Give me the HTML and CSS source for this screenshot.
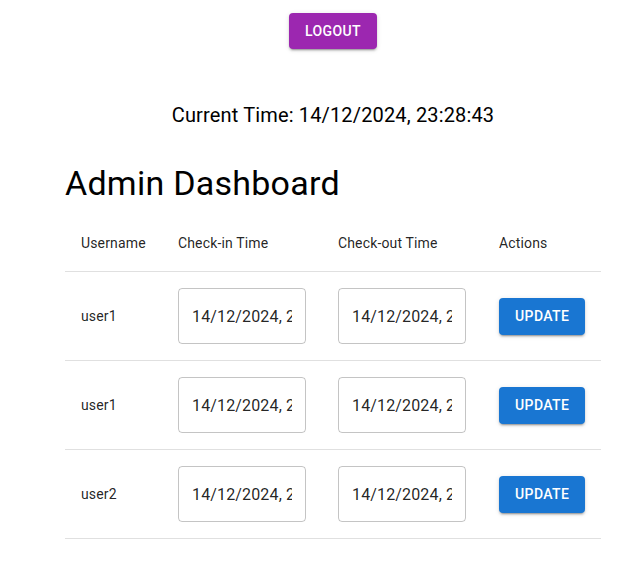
FILE: index.html
```html
<!DOCTYPE html>
<html>
<head>
<meta charset="utf-8">
<link rel="stylesheet" href="styles.css">
</head>
<body>
<div class="page">
  <div class="top">
    <button class="btn btn-logout">Logout</button>
  </div>
  <h6 class="clock">Current Time: 14/12/2024, 23:28:43</h6>
  <h4 class="title">Admin Dashboard</h4>
  <table class="table">
    <colgroup>
      <col class="c1"><col class="c2"><col class="c3"><col class="c4">
    </colgroup>
    <thead>
      <tr><th>Username</th><th>Check-in Time</th><th>Check-out Time</th><th>Actions</th></tr>
    </thead>
    <tbody>
      <tr>
        <td>user1</td>
        <td><div class="field"><input class="input" type="text" value="14/12/2024, 23:28"></div></td>
        <td><div class="field"><input class="input" type="text" value="14/12/2024, 23:28"></div></td>
        <td><button class="btn btn-update">Update</button></td>
      </tr>
      <tr>
        <td>user1</td>
        <td><div class="field"><input class="input" type="text" value="14/12/2024, 23:28"></div></td>
        <td><div class="field"><input class="input" type="text" value="14/12/2024, 23:28"></div></td>
        <td><button class="btn btn-update">Update</button></td>
      </tr>
      <tr>
        <td>user2</td>
        <td><div class="field"><input class="input" type="text" value="14/12/2024, 23:28"></div></td>
        <td><div class="field"><input class="input" type="text" value="14/12/2024, 23:28"></div></td>
        <td><button class="btn btn-update">Update</button></td>
      </tr>
    </tbody>
  </table>
</div>
</body>
</html>
```
FILE: styles.css
```css
html, body {
  margin: 0;
  padding: 0;
  background: #fff;
}
body {
  font-family: Roboto, "Liberation Sans", sans-serif;
  color: rgba(0, 0, 0, 0.87);
}
.page {
  width: 536px;
  margin-left: 65px;
  padding-top: 13px;
}
.top {
  display: flex;
  justify-content: center;
}
.btn {
  font-family: Roboto, sans-serif;
  font-weight: 500;
  font-size: 14px;
  line-height: 24px;
  letter-spacing: 0.4px;
  text-transform: uppercase;
  color: #fff;
  border: 0;
  border-radius: 4px;
  padding: 6px 16px;
  cursor: pointer;
  box-shadow: 0px 3px 1px -2px rgba(0,0,0,0.2), 0px 2px 2px 0px rgba(0,0,0,0.14), 0px 1px 5px 0px rgba(0,0,0,0.12);
}
.btn-logout {
  background: #9c27b0;
  width: 88px;
  height: 36px;
}
.btn-update {
  background: #1976d2;
  width: 86px;
  height: 37px;
}
.clock {
  margin: 50px 0 0 0;
  text-align: center;
  font-size: 20px;
  font-weight: 400;
  line-height: 32px;
  letter-spacing: 0.15px;
  color: #000;
}
.title {
  margin: 31px 0 0 0;
  font-size: 34px;
  font-weight: 400;
  line-height: 42px;
  letter-spacing: 0.25px;
  color: #000;
}
.table {
  width: 536px;
  border-collapse: collapse;
  margin-top: 11px;
  table-layout: fixed;
}
.c1 { width: 97px; }
.c2 { width: 160px; }
.c3 { width: 161px; }
.c4 { width: 118px; }
.table th, .table td {
  text-align: left;
  padding: 16px;
  font-size: 14px;
  line-height: 24px;
  letter-spacing: 0.15px;
  border-bottom: 1px solid #e0e0e0;
  vertical-align: middle;
}
.table th {
  font-weight: 400;
}
.table td {
  font-weight: 400;
}
.field {
  width: 128px;
  height: 56px;
  box-sizing: border-box;
  border: 1px solid rgba(0, 0, 0, 0.23);
  border-radius: 4px;
  display: flex;
  align-items: center;
}
.input {
  width: 100%;
  box-sizing: border-box;
  border: 0;
  outline: none;
  background: transparent;
  padding: 0 13px;
  font-family: Roboto, sans-serif;
  font-size: 16px;
  letter-spacing: 0.15px;
  color: rgba(0, 0, 0, 0.87);
  height: 23px;
}
```
